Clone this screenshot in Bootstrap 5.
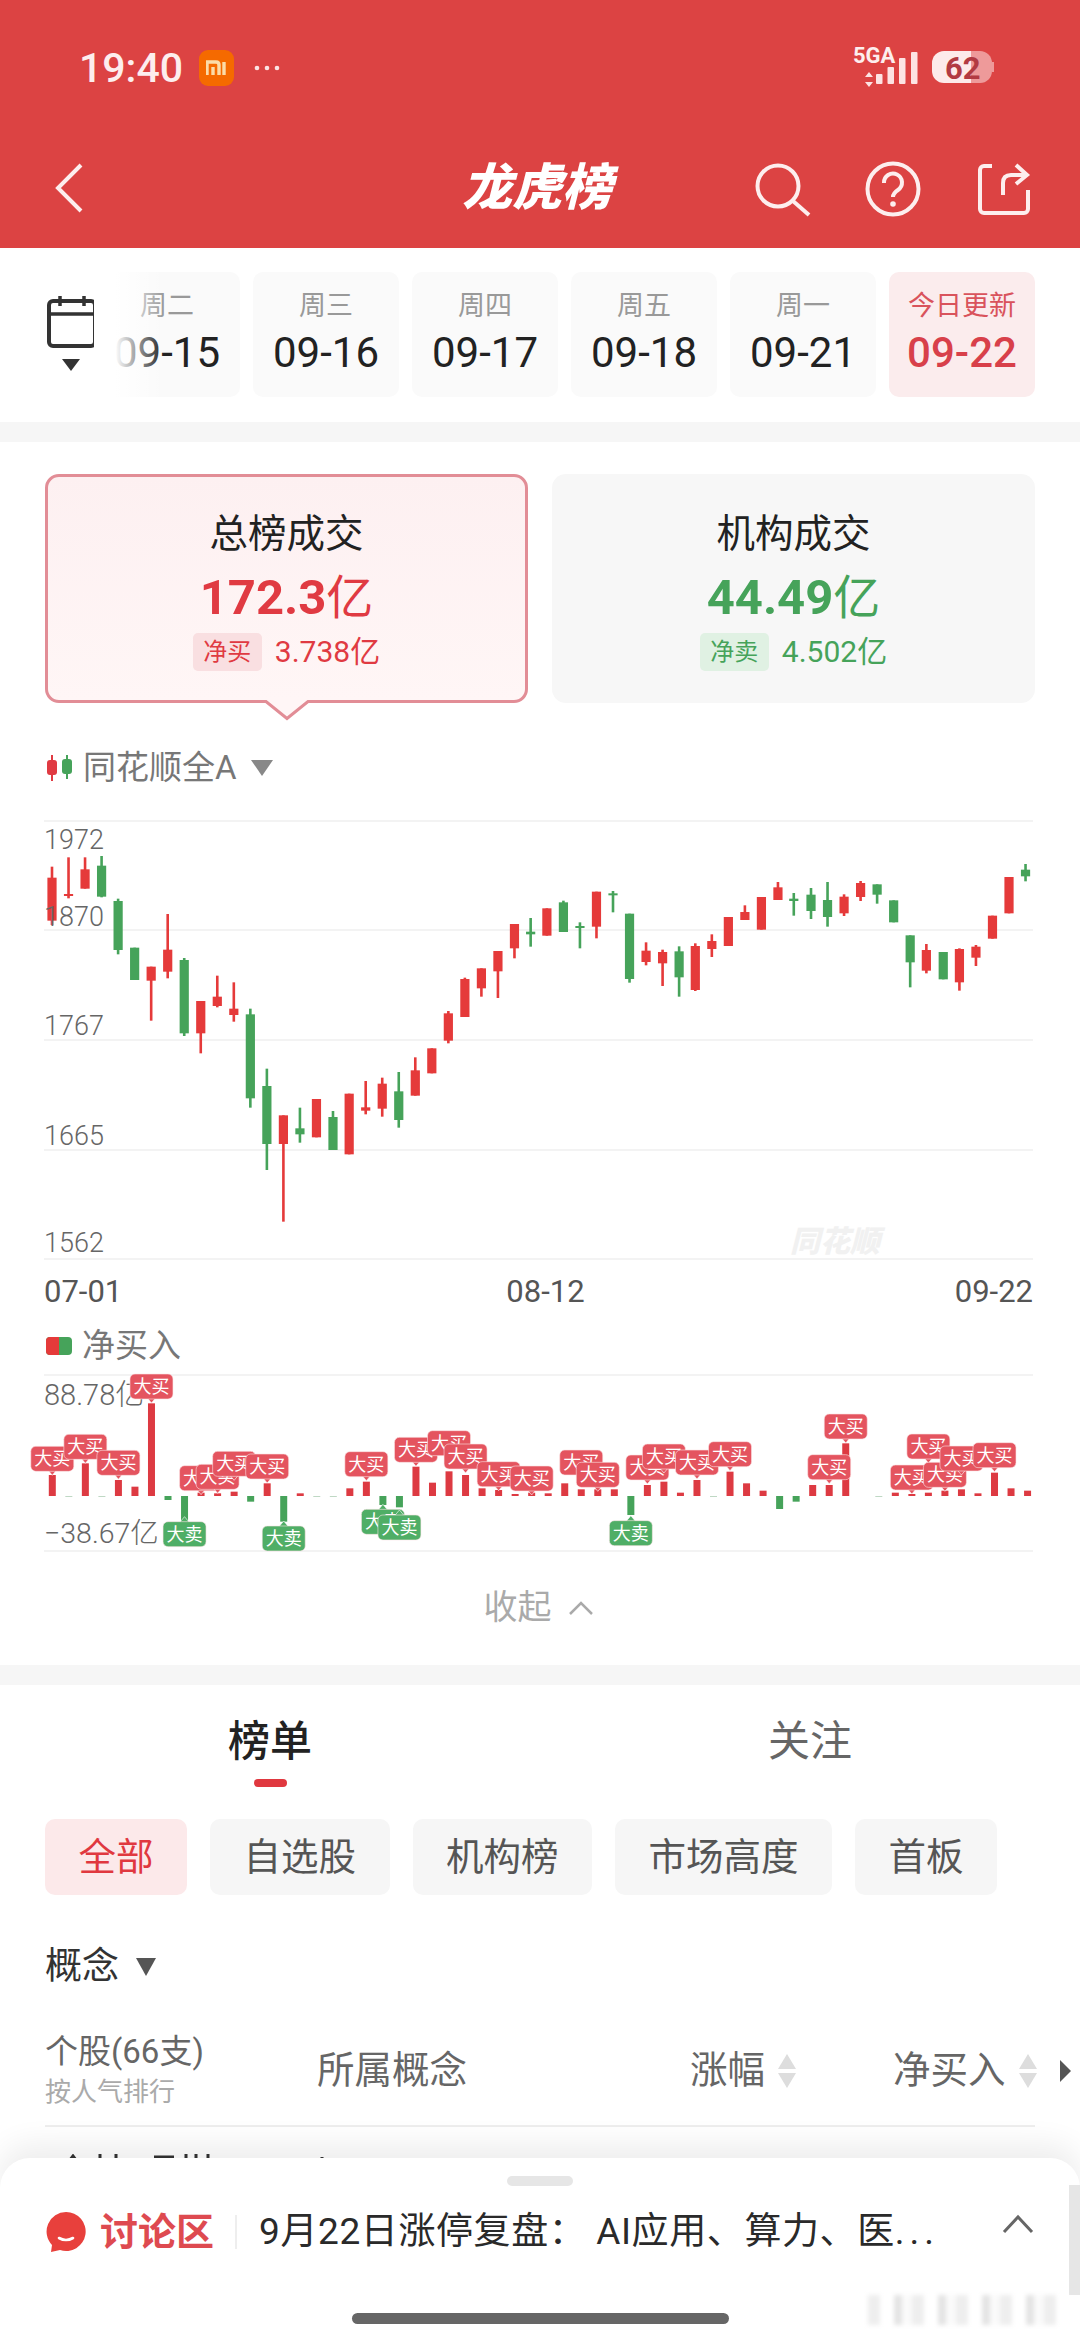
<!DOCTYPE html>
<html lang="zh-CN">
<head>
    <meta charset="UTF-8">
    <title>龙虎榜</title>
    <link rel="stylesheet" href="https://cdn.jsdelivr.net/npm/bootstrap@5.3.0/dist/css/bootstrap.min.css">
    <style>
        html, body { width: 1080px; height: 2339px; overflow: hidden; }
        body { font-family: Roboto, "Noto Sans CJK SC", sans-serif; background: #fff; color: #222; position: relative; }
        svg { display: block; }
        .app-head { background: #dc4343; height: 248px; color: #fff; }
        .status-row { height: 136px; padding: 0 85px 0 79px; }
        .status-time { font-size: 41px; font-weight: 500; line-height: 1; color: #fdeeee; }
        .mi-badge { width: 35px; height: 36px; background: #f56a00; border-radius: 9px; margin-left: 16px; }
        .status-dots { margin-left: 19px; }
        .nav-row { height: 104px; padding: 0 45px 0 45px; display: grid; grid-template-columns: 1fr auto 1fr; align-items: center; }
        .nav-back { margin-left: 8px; }
        .nav-title { font-size: 50px; font-weight: 900; font-style: italic; line-height: 1; margin-right: 6px; }
        .nav-icons { gap: 48px; }
        .help-icon { margin-right: 4px; }
        .date-strip { height: 174px; padding: 24px 45px 0 47px; }
        .cal-box { width: 50px; margin-top: 24px; flex: none; }
        .date-scroll { width: 941px; margin-left: -3px; height: 125px; overflow: hidden; position: relative; gap: 13px; }
        .date-scroll::after { content: ""; position: absolute; left: 0; top: 0; bottom: 0; width: 70px; background: linear-gradient(90deg, #fff 30%, rgba(255,255,255,0)); }
        .date-cell { width: 146px; height: 125px; flex: none; background: #fafafa; border-radius: 10px; text-align: center; }
        .date-week { font-size: 27px; color: #999; line-height: 34px; padding-top: 17px; }
        .date-num { font-size: 42px; color: #222; line-height: 46px; margin-top: 7px; }
        .date-cell.on { background: #fbeced; }
        .date-cell.on .date-week { color: #d9535c; }
        .date-cell.on .date-num { color: #d8404a; font-weight: 500; }
        .gray-band { height: 20px; background: #f6f6f6; }
        .sum-wrap { padding: 32px 45px 0; gap: 24px; }
        .sum-card { width: 483px; height: 229px; border-radius: 14px; text-align: center; background: #f7f7f7; padding-top: 35px; position: relative; }
        .sum-card.on { border: 3px solid #e28d96; background: linear-gradient(#fdf0f1, #fff6f6); padding-top: 32px; }
        .sum-arrow { position: absolute; left: 50%; bottom: -21px; margin-left: -37px; }
        .sum-title { font-size: 38.500px; line-height: 50px; color: #222; }
        .sum-value { font-size: 49px; font-weight: 700; line-height: 60px; margin-top: 5px; }
        .sum-value span { font-size: 47px; font-weight: 400; font-family: "Noto Sans CJK SC", sans-serif; }
        .sum-sub { margin-top: 5px; gap: 13px; font-size: 30px; line-height: 38px; }
        .sum-tag { font-size: 24px; width: 69px; border-radius: 5px; }
        .txt-red { color: #e03a42; }
        .txt-green { color: #46a35a; }
        .tag-red { background: #f9dfe1; }
        .tag-green { background: #e0f1e3; }
        .legend-row { padding-left: 46px; height: 36px; font-size: 33px; line-height: 36px; color: #777; gap: 10px; }
        .legend-a { margin-top: 47px; }
        .chart-a { margin-top: 29px; }
        .axis-dates { margin-top: 12px; padding: 0 47px 0 44px; height: 30px; font-size: 31px; line-height: 30px; color: #555; }
        .axis-mid { margin-left: 14px; }
        .legend-b { margin-top: 21px; }
        .chart-b { margin-top: 6px; }
        .fold-row { margin-top: 30px; height: 35px; font-size: 34px; line-height: 35px; color: #aaa; gap: 17px; margin-bottom: 40px; padding-right: 4px; }
        .tab-row { padding-top: 27px; height: 94px; }
        .tab-item { width: 540px; font-size: 42px; line-height: 60px; text-align: center; color: #666; }
        .tab-item.on { color: #222; font-weight: 500; }
        .tab-mark { width: 33px; height: 8px; border-radius: 4px; background: #e0383f; margin: 7px 0 0 254px; }
        .chip-row { margin-top: 40px; padding: 0 45px; gap: 23px; }
        .chip-item { height: 76px; line-height: 76px; font-size: 37.500px; padding: 0 33.500px; background: #f6f6f6; color: #555; border-radius: 10px; }
        .chip-item.on { background: #fce9ea; color: #e0383f; }
        .concept-row { margin-top: 47px; padding-left: 45px; height: 50px; font-size: 37px; line-height: 50px; color: #333; gap: 17px; }
        .list-head { margin: 39px 45px 0; height: 96px; border-bottom: 2px solid #eee; color: #666; font-size: 37.500px; padding-bottom: 18px; }
        .head-c1 { width: 272px; flex: none; }
        .head-c2 { width: 373px; flex: none; padding-top: 3px; }
        .head-c3 { width: 203px; flex: none; gap: 12px; padding-top: 3px; }
        .head-c4 { gap: 12px; flex: none; width: 142px; padding-top: 3px; white-space: nowrap; }
        .head-c4 svg { flex: none; }
        .head-main { font-size: 33px; line-height: 46px; }
        .head-sub { font-size: 26px; line-height: 34px; color: #aaa; }
        .head-more { margin-left: 10px; }
        .cut-row { margin: 27px 0 0 66px; }
        .bottom-sheet { position: absolute; left: 0; right: 0; top: 2158px; bottom: 0; background: #fff; border-radius: 30px 30px 0 0; box-shadow: 0 -14px 30px rgba(0,0,0,.07); }
        .sheet-handle { width: 66px; height: 10px; border-radius: 5px; background: #e6e6e6; margin: 18px auto 0; }
        .sheet-row { margin-top: 22px; padding-left: 46px; height: 48px; }
        .sheet-label { font-size: 38px; font-weight: 700; color: #de4a50; margin-left: 14px; line-height: 48px; }
        .sheet-line { width: 2px; height: 34px; background: #eee; margin: 0 22px 0 21px; }
        .sheet-text { font-size: 37px; color: #2a2a2a; line-height: 48px; width: 743px; white-space: nowrap; letter-spacing: .6px; }
        .sheet-dots { letter-spacing: 5px; }
        .sheet-up { margin-top: -16px; }
        .scroll-strip { position: absolute; left: 1069px; top: 2185px; width: 11px; height: 110px; background: #e6e6e6; }
        .mark-smear { position: absolute; left: 868px; top: 2295px; width: 200px; height: 30px; filter: blur(2px); background: repeating-linear-gradient(90deg, #eee 0 12px, #fff 12px 26px, #e4e4e4 26px 34px, #fafafa 34px 44px); }
        .home-bar { position: absolute; left: 352px; top: 2313px; width: 377px; height: 11px; border-radius: 6px; background: #666; }
    </style>
</head>
<body>

<div class="app-head">
    <div class="status-row d-flex align-items-center">
        <span class="status-time">19:40</span>
        <span class="mi-badge d-flex align-items-center justify-content-center">
            <svg width="22" height="16" viewBox="0 0 22 16"><path d="M1 15V2H10Q13 2 13 5V15M7 15V7M18 2V15" fill="none" stroke="#fbdca8" stroke-width="3.4"/></svg>
        </span>
        <svg class="status-dots" width="28" height="8" viewBox="0 0 28 8"><circle cx="4" cy="4" r="2.300" fill="#fbe3e3"/><circle cx="14" cy="4" r="2.300" fill="#fbe3e3"/><circle cx="24" cy="4" r="2.300" fill="#fbe3e3"/></svg>
        <svg class="ms-auto" width="144" height="56" viewBox="852 40 144 56">
            <text x="854" y="63" font-family="Roboto" font-weight="700" font-size="22" fill="#fdeeee">5GA</text>
            <path d="M870 72l4 5h-8zM870 87l-4-5h8z" fill="#fde3e3"/>
            <rect x="877" y="74" width="6.5" height="10" rx="1" fill="#fde3e3"/>
            <rect x="888.500" y="67" width="6.500" height="17" rx="1" fill="#fde3e3"/>
            <rect x="900" y="58" width="6.500" height="26" rx="1" fill="#fde3e3"/>
            <rect x="912" y="52" width="6.500" height="32" rx="1" fill="#fde3e3"/>
            <path d="M972 51H945a12 12 0 0 0-12 12v8a12 12 0 0 0 12 12h27z" fill="#fdeaea"/>
            <path d="M972 51h9a12 12 0 0 1 12 12v8a12 12 0 0 1-12 12h-9z" fill="#ee9a9a"/>
            <rect x="993" y="62" width="2" height="10" fill="#ee9a9a"/>
            <text x="946" y="79" font-family="Roboto" font-weight="700" font-size="31" fill="#b23a42">62</text>
        </svg>
    </div>
    <div class="nav-row">
        <svg class="nav-back" width="32" height="52" viewBox="0 0 32 52"><path d="M28 3L5 26l23 23" fill="none" stroke="#fdeeee" stroke-width="4"/></svg>
        <div class="nav-title">龙虎榜</div>
        <div class="nav-icons d-flex justify-content-end">
            <svg width="60" height="60" viewBox="755 158 60 60"><circle cx="778" cy="186" r="20.500" fill="none" stroke="#fdeeee" stroke-width="4"/><path d="M793 201l16 14" stroke="#fdeeee" stroke-width="4" fill="none"/></svg>
            <svg class="help-icon" width="60" height="60" viewBox="863 158 60 60"><circle cx="893" cy="189" r="25.500" fill="none" stroke="#fdeeee" stroke-width="4"/><path d="M884 183a9 9 0 1 1 14 7c-3 2-5 4-5 7" fill="none" stroke="#fdeeee" stroke-width="4"/><circle cx="893" cy="204" r="2.800" fill="#fdeeee"/></svg>
            <svg width="60" height="60" viewBox="975 158 60 60"><path d="M992 166h-8a4 4 0 0 0-4 4v39a4 4 0 0 0 4 4h40a4 4 0 0 0 4-4v-19" fill="none" stroke="#fdeeee" stroke-width="4"/><path d="M1003 195v-12q0-8 8-8h15M1016 165l11 10-11 9" fill="none" stroke="#fdeeee" stroke-width="4"/></svg>
        </div>
    </div>
</div>

<div class="date-strip d-flex">
    <div class="cal-box">
        <svg width="50" height="76" viewBox="47 295 50 76">
            <rect x="49" y="300" width="46" height="45" rx="4" fill="none" stroke="#333" stroke-width="4"/>
            <path d="M49 313h46M60 295v10M84 295v10" stroke="#333" stroke-width="3.500"/>
            <path d="M62 358h18l-9 12z" fill="#333"/>
        </svg>
    </div>
    <div class="date-scroll d-flex">
        <div class="date-cell"><div class="date-week">周二</div><div class="date-num">09-15</div></div>
        <div class="date-cell"><div class="date-week">周三</div><div class="date-num">09-16</div></div>
        <div class="date-cell"><div class="date-week">周四</div><div class="date-num">09-17</div></div>
        <div class="date-cell"><div class="date-week">周五</div><div class="date-num">09-18</div></div>
        <div class="date-cell"><div class="date-week">周一</div><div class="date-num">09-21</div></div>
        <div class="date-cell on"><div class="date-week">今日更新</div><div class="date-num">09-22</div></div>
    </div>
</div>
<div class="gray-band"></div>

<div class="sum-wrap d-flex">
    <div class="sum-card on">
        <div class="sum-title">总榜成交</div>
        <div class="sum-value txt-red">172.3<span>亿</span></div>
        <div class="sum-sub d-flex justify-content-center txt-red"><span class="sum-tag tag-red">净买</span><span>3.738亿</span></div>
        <svg class="sum-arrow" width="74" height="22" viewBox="0 0 74 22"><path d="M16 0h42v3L37 20 16 3z" fill="#fff6f6"/><path d="M0 2.500h16l21 17 21-17h16" fill="none" stroke="#e28d96" stroke-width="3"/></svg>
    </div>
    <div class="sum-card">
        <div class="sum-title">机构成交</div>
        <div class="sum-value txt-green">44.49<span>亿</span></div>
        <div class="sum-sub d-flex justify-content-center txt-green"><span class="sum-tag tag-green">净卖</span><span>4.502亿</span></div>
    </div>
</div>

<div class="legend-row legend-a d-flex align-items-center">
    <svg width="27" height="26" viewBox="0 0 27 26"><path d="M6 0v26" stroke="#e03a42" stroke-width="2"/><rect x="1" y="5" width="10" height="15" rx="3" fill="#e03a42"/><path d="M21 0v24" stroke="#46a35a" stroke-width="2"/><rect x="16" y="4" width="10" height="15" rx="3" fill="#46a35a"/></svg>
    <span>同花顺全A</span>
    <svg class="ms-1" width="22" height="16" viewBox="0 0 22 16"><path d="M0 0h22L11 16z" fill="#888"/></svg>
</div>

<svg class="chart-a" id="kline" width="1080" height="450" viewBox="0 815 1080 450"></svg>

<div class="axis-dates d-flex justify-content-between"><span>07-01</span><span class="axis-mid">08-12</span><span>09-22</span></div>

<div class="legend-row legend-b d-flex align-items-center">
    <svg width="26" height="18" viewBox="0 0 26 18"><rect width="26" height="18" rx="4" fill="#46a35a"/><path d="M4 0h9v18H4a4 4 0 0 1-4-4V4a4 4 0 0 1 4-4z" fill="#e53a3a"/></svg>
    <span>净买入</span>
</div>

<svg class="chart-b" id="netbars" width="1080" height="190" viewBox="0 1370 1080 190"></svg>

<div class="fold-row d-flex justify-content-center align-items-center">
    <span>收起</span>
    <svg width="24" height="14" viewBox="0 0 24 14"><path d="M1 13L12 2l11 11" fill="none" stroke="#aaa" stroke-width="2.500"/></svg>
</div>
<div class="gray-band"></div>

<div class="tab-row d-flex">
    <div class="tab-item on">榜单<div class="tab-mark"></div></div>
    <div class="tab-item">关注</div>
</div>

<div class="chip-row d-flex">
    <div class="chip-item on">全部</div>
    <div class="chip-item">自选股</div>
    <div class="chip-item">机构榜</div>
    <div class="chip-item">市场高度</div>
    <div class="chip-item">首板</div>
</div>

<div class="concept-row d-flex align-items-center">
    <span>概念</span>
    <svg width="20" height="18" viewBox="0 0 20 18"><path d="M0 0h20L10 18z" fill="#555"/></svg>
</div>

<div class="list-head d-flex align-items-center">
    <div class="head-c1">
        <div class="head-main">个股(66支)</div>
        <div class="head-sub">按人气排行</div>
    </div>
    <div class="head-c2">所属概念</div>
    <div class="head-c3 d-flex align-items-center">
        <span>涨幅</span>
        <svg width="20" height="34" viewBox="0 0 20 34"><path d="M10 0l9 15H1z" fill="#ddd"/><path d="M10 34L1 19h18z" fill="#ddd"/></svg>
    </div>
    <div class="head-c4 d-flex align-items-center">
        <span>净买入</span>
        <svg width="20" height="34" viewBox="0 0 20 34"><path d="M10 0l9 15H1z" fill="#ddd"/><path d="M10 34L1 19h18z" fill="#ddd"/></svg>
        <svg class="head-more" width="11" height="22" viewBox="0 0 11 22"><path d="M0 0l11 11L0 22z" fill="#555"/></svg>
    </div>
</div>
<svg class="cut-row" width="270" height="6" viewBox="0 0 270 6"><path d="M4 6l3-4 3 4zM34 6V0M50 6V0M88 3h20M120 6V0M130 6V0M142 6V0M256 6V3" stroke="#333" stroke-width="3" fill="none"/></svg>

<div class="bottom-sheet">
    <div class="sheet-handle"></div>
    <div class="sheet-row d-flex align-items-center">
        <svg width="40" height="42" viewBox="0 0 40 42"><path d="M20 1a19.500 19.500 0 1 1-6 38l-9 2 1-7A19.500 19.500 0 0 1 20 1z" fill="#e8403c"/><path d="M13 27q7 4 14 0" fill="none" stroke="#fff" stroke-width="2.600" stroke-linecap="round"/></svg>
        <span class="sheet-label">讨论区</span>
        <span class="sheet-line"></span>
        <span class="sheet-text">9月22日涨停复盘： AI应用、算力、医<span class="sheet-dots">...</span></span>
        <svg class="sheet-up" width="32" height="20" viewBox="0 0 32 20"><path d="M2 18L16 3l14 15" fill="none" stroke="#666" stroke-width="3"/></svg>
    </div>
</div>
<div class="scroll-strip"></div>
<div class="mark-smear"></div>
<div class="home-bar"></div>

<script>
// k线数据: [x, 实体上, 实体下, 影线上, 影线下, 颜色], 坐标按截图量出来的
const candlesLeft = [
    [151,233,362,200,375,'r'],[199,282,288,172,295,'r'],[247,208,266,172,266,'r'],[295,197,290,168,292,'g'],
    [343,303,450,296,463,'g'],[391,443,540,443,540,'g'],[439,500,542,500,662,'r'],[487,449,515,342,535,'r'],
    [535,480,700,474,708,'g'],[583,603,700,603,760,'r'],[631,590,618,527,622,'r'],[679,626,645,547,665,'r'],
    [727,643,895,626,923,'g'],[775,858,1032,806,1110,'g'],[823,946,1032,946,1265,'r'],[871,985,1003,923,1028,'g'],
    [919,897,1012,897,1012,'r'],[967,951,1050,933,1050,'g'],[1014,881,1063,881,1063,'r'],[1062,922,932,843,943,'r'],
    [1110,851,926,833,950,'r'],[1158,874,960,816,983,'g'],[1206,811,887,772,887,'r'],[1254,745,820,745,820,'r'],
    [1302,640,722,633,730,'r'],[1350,537,651,533,651,'r'],[1398,505,565,505,590,'r'],[1446,453,514,453,594,'r'],
    [1494,372,445,372,475,'r'],[1541,395,403,354,440,'g']
];
const candlesRight = [
    [20,325,407,325,407,'r'],[68,307,396,302,396,'g'],[116,378,384,367,445,'g'],[164,275,380,275,415,'r'],
    [212,280,286,273,337,'g'],[260,341,537,341,548,'g'],[308,452,486,427,496,'r'],[356,456,490,449,558,'r'],
    [404,454,532,439,590,'g'],[451,438,570,430,573,'r'],[499,423,447,403,471,'r'],[547,351,438,351,438,'r'],
    [595,336,360,316,360,'r'],[643,291,389,291,389,'r'],[691,262,300,246,300,'r'],[737,296,303,279,347,'g'],
    [787,284,333,264,357,'g'],[835,300,351,246,380,'g'],[883,290,340,283,348,'r'],[931,249,291,243,303,'r'],
    [979,253,284,253,311,'g'],[1027,301,367,301,367,'g'],[1075,406,487,406,562,'g'],[1122,450,512,432,520,'r'],
    [1171,456,538,456,538,'g'],[1218,447,547,445,572,'r'],[1266,440,473,435,498,'r'],[1314,347,416,347,416,'r'],
    [1362,231,340,231,340,'r'],[1410,209,229,192,244,'g']
];
const RED = '#e53a3a', GREEN = '#46a35a';

function drawKline() {
    let s = '';
    [821, 930, 1040, 1150, 1259].forEach(y => {
        s += `<rect x="44" y="${y - 1}" width="989" height="2" fill="#f3f3f3"/>`;
    });
    s += `<text x="790" y="1252" font-size="30" font-weight="900" font-style="italic" fill="#f1f1f1" font-family="Noto Sans CJK SC">同花顺</text>`;
    const draw = (c, offset) => {
        const x = offset + c[0] / 2.904, col = c[5] === 'r' ? RED : GREEN;
        const h = v => 800 + v / 3;
        s += `<rect x="${x - 1.3}" y="${h(c[3])}" width="2.6" height="${(c[4] - c[3]) / 3}" fill="${col}"/>`;
        s += `<rect x="${x - 4.6}" y="${h(c[1])}" width="9.2" height="${(c[2] - c[1]) / 3}" fill="${col}"/>`;
    };
    candlesLeft.forEach(c => draw(c, 0));
    candlesRight.forEach(c => draw(c, 540));
    [['1972', 849], ['1870', 926], ['1767', 1035], ['1665', 1145], ['1562', 1252]].forEach(l => {
        s += `<text x="44" y="${l[1]}" font-size="27" font-weight="300" fill="#666" font-family="Roboto">${l[0]}</text>`;
    });
    document.getElementById('kline').innerHTML = s;
}

// 净买入柱子, 值是柱顶的y, 588是零轴
const netTops = [525,591,490,591,540,560,310,600,665,578,580,575,605,550,665,580,591,591,565,545,615,622,500,548,514,525,565,570,582,578,
                 580,550,568,568,568,645,555,545,578,540,591,515,550,572,627,605,555,555,430,588,591,578,582,578,572,568,580,518,565,572];
const buyTags = [[0,439],[2,403],[4,451],[6,222],[9,497],[10,493],[11,454],[13,462],[19,455],[22,412],[24,392],[25,432],[27,485],[29,498],
                 [32,450],[33,487],[36,465],[37,432],[39,450],[41,425],[47,464],[48,342],[52,495],[53,402],[54,487],[55,438],[57,428]];
const sellTags = [[8,665],[14,678],[20,628],[21,645],[35,662]];

function drawNetBars() {
    const h = v => 1300 + v / 3;
    const px = i => 52.3 + 16.53 * i;
    let s = '';
    [1375, 1551].forEach(y => { s += `<rect x="44" y="${y - 1}" width="989" height="2" fill="#f3f3f3"/>`; });
    s += `<text x="44" y="1405" font-size="29" font-weight="300" fill="#666" font-family="Roboto, Noto Sans CJK SC">88.78亿</text>`;
    s += `<text x="44" y="1543" font-size="28.500" font-weight="300" fill="#666" font-family="Roboto, Noto Sans CJK SC">−38.67亿</text>`;
    netTops.forEach((t, i) => {
        if (t === 588) return;
        if (t < 588) s += `<rect x="${px(i) - 3.5}" y="${h(t)}" width="7" height="${(588 - t) / 3}" fill="#dd3a42"/>`;
        else s += `<rect x="${px(i) - 3.5}" y="${h(588)}" width="7" height="${(t - 588) / 3}" fill="${t < 592 ? '#bfd8c4' : GREEN}"/>`;
    });
    const tag = (i, top, buy) => {
        const cx = px(i), y = h(top), col = buy ? '#e4545f' : '#4fae66';
        const arrow = buy ? `M${cx - 5} ${y + 23}h10l-5 6z` : `M${cx - 5} ${y + 1}h10l-5 -6z`;
        s += `<path d="${arrow}" fill="${col}" stroke="#fff" stroke-width=".6"/>`;
        s += `<rect x="${cx - 21.5}" y="${y}" width="43" height="25" rx="5" fill="${col}" stroke="#fbe4e6" stroke-width=".6"/>`;
        s += `<text x="${cx}" y="${y + 19}" font-size="18" text-anchor="middle" fill="#fff" font-family="Noto Sans CJK SC">${buy ? '大买' : '大卖'}</text>`;
    };
    const all = buyTags.map(t => [t[0], t[1], true]).concat(sellTags.map(t => [t[0], t[1], false]));
    all.sort((a, b) => a[0] - b[0]).forEach(t => tag(t[0], t[1], t[2]));
    document.getElementById('netbars').innerHTML = s;
}

drawKline();
drawNetBars();
</script>
<script src="https://cdn.jsdelivr.net/npm/bootstrap@5.3.0/dist/js/bootstrap.bundle.min.js"></script>
</body>
</html>
